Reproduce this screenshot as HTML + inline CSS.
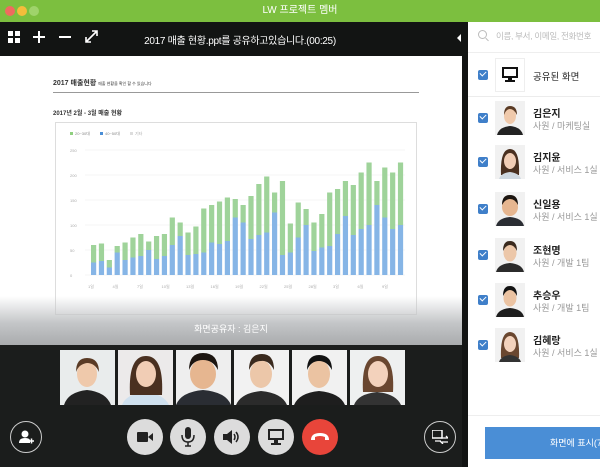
<!DOCTYPE html>
<html><head><meta charset="utf-8"><style>
*{margin:0;padding:0;box-sizing:border-box}
body{width:600px;height:467px;overflow:hidden;font-family:"Liberation Sans","Noto Sans CJK KR",sans-serif;background:#1b1d1c;position:relative}
.abs{position:absolute;white-space:nowrap}
.title{left:0;top:0;width:600px;height:22px;background:#7cbf3f;color:#fff;font-size:10px;text-align:center;line-height:22px}
.dot{top:6px;width:10px;height:10px;border-radius:50%}
.tool{left:0;top:22px;width:468px;height:34px;background:#121413;color:#fff}
.right{left:468px;top:22px;width:132px;height:445px;background:#fff}
.row{left:0;width:132px;height:44px;border-bottom:1px solid #ececec}
.cb{left:10px;width:10px;height:10px;background:#3f7fc9;border-radius:2px}
.cb:after{content:"";position:absolute;left:2px;top:1px;width:5px;height:3px;border-left:1.5px solid #fff;border-bottom:1.5px solid #fff;transform:rotate(-45deg)}
.av{left:27px;width:30px;height:34px;background:#f1f1f1;overflow:hidden}
.nm{left:65px;font-size:10px;color:#222;font-weight:bold}
.sub{left:65px;font-size:9px;color:#999}
.btn{top:419px;width:36px;height:36px;border-radius:50%;background:#dcdcdc}
.thumb{top:350px;width:55px;height:55px;overflow:hidden;background:#e8eaea}
</style></head><body>
<div class="abs title">LW 프로젝트 멤버</div>
<div class="abs dot" style="left:5px;background:#ef6b5f"></div>
<div class="abs dot" style="left:17px;background:#f3bd3b"></div>
<div class="abs dot" style="left:29px;background:#9fd36b"></div>

<div class="abs tool">
 <svg class="abs" style="left:8px;top:9px" width="12" height="12"><rect x="0" y="0" width="5" height="5" fill="#fff"/><rect x="7" y="0" width="5" height="5" fill="#fff"/><rect x="0" y="7" width="5" height="5" fill="#fff"/><rect x="7" y="7" width="5" height="5" fill="#fff"/></svg>
 <div class="abs" style="left:33px;top:14px;width:12px;height:2px;background:#fff"></div>
 <div class="abs" style="left:38px;top:9px;width:2px;height:12px;background:#fff"></div>
 <div class="abs" style="left:59px;top:14px;width:12px;height:2px;background:#fff"></div>
 <svg class="abs" style="left:85px;top:8px" width="13" height="13"><path d="M1 12 L12 1 M7 1 H12 V6 M1 7 V12 H6" stroke="#fff" stroke-width="1.6" fill="none"/></svg>
 <div class="abs" style="left:110px;top:10px;font-size:10px;width:260px;text-align:center;letter-spacing:-0.3px">2017 매출 현황.ppt를 공유하고있습니다.(00:25)</div>
 <svg class="abs" style="left:457px;top:12px" width="5" height="8"><path d="M4 0 L0 4 L4 8Z" fill="#fff"/></svg>
</div>

<!-- slide -->
<div class="abs" style="left:0;top:56px;width:462px;height:289px;background:#fff;overflow:hidden">
 <div class="abs" style="left:53px;top:22px;font-size:7px;color:#333;font-weight:bold">2017 매출현황 <span style="font-size:4px;font-weight:normal">매출 현황을 확인 할 수 있습니다</span></div>
 <div class="abs" style="left:53px;top:36px;width:366px;height:1px;background:#999"></div>
 <div class="abs" style="left:53px;top:52px;font-size:6px;color:#333;font-weight:bold">2017년 2월 - 3월 매출 현황</div>
 <div class="abs" style="left:55px;top:66px;width:362px;height:193px;border:1px solid #ddd"></div>
 <svg class="abs" style="left:0;top:0" width="462" height="289" id="ch"></svg>
 <div class="abs" style="left:0;top:240px;width:462px;height:49px;background:linear-gradient(rgba(255,255,255,0),#c4c6c8 55%,#a9abad)"></div>
 <div class="abs" style="left:0;top:266px;width:462px;text-align:center;color:#fff;font-size:9px">화면공유자 : 김은지</div>
</div>

<div class="abs thumb" style="left:60px"><svg width="55" height="55"><rect width="55" height="55" fill="#e9ecec"/><path d="M4 55 Q8 42 27 40 Q46 42 51 55Z" fill="#222"/><ellipse cx="27" cy="24" rx="10" ry="13" fill="#efc9ab"/><path d="M16 22 Q16 8 27 8 Q39 8 39 22 Q35 13 27 13 Q19 14 16 22Z" fill="#5a3b25"/></svg></div>
<div class="abs thumb" style="left:118px"><svg width="55" height="55"><rect width="55" height="55" fill="#eceaea"/><path d="M4 55 Q8 44 27 42 Q46 44 51 55Z" fill="#cfe0ee"/><path d="M12 45 Q10 6 28 6 Q46 6 44 45Z" fill="#4a3020"/><ellipse cx="28" cy="24" rx="10" ry="13" fill="#f1cdb5"/></svg></div>
<div class="abs thumb" style="left:176px"><svg width="55" height="55"><rect width="55" height="55" fill="#eee"/><path d="M0 55 Q5 42 27 40 Q50 42 55 55Z" fill="#2a2d33"/><ellipse cx="27" cy="24" rx="13" ry="15" fill="#e6b690"/><path d="M13 20 Q13 3 27 3 Q42 3 42 20 Q37 10 27 10 Q17 10 13 20Z" fill="#1c1510"/></svg></div>
<div class="abs thumb" style="left:234px"><svg width="55" height="55"><rect width="55" height="55" fill="#f2f2f2"/><path d="M2 55 Q7 43 27 41 Q48 43 53 55Z" fill="#2b2b2b"/><ellipse cx="27" cy="24" rx="11" ry="14" fill="#ecc7a9"/><path d="M15 20 Q15 4 28 4 Q40 4 40 20 Q35 10 27 11 Q19 11 15 20Z" fill="#3a2a1e"/></svg></div>
<div class="abs thumb" style="left:292px"><svg width="55" height="55"><rect width="55" height="55" fill="#f1f1f1"/><path d="M2 55 Q7 43 27 41 Q48 43 53 55Z" fill="#1e1e1e"/><ellipse cx="27" cy="24" rx="11" ry="14" fill="#ebc3a2"/><path d="M15 20 Q15 5 27 5 Q40 5 40 20 Q35 11 27 11 Q19 11 15 20Z" fill="#121212"/></svg></div>
<div class="abs thumb" style="left:350px"><svg width="55" height="55"><rect width="55" height="55" fill="#eef0f0"/><path d="M4 55 Q8 44 27 42 Q46 44 51 55Z" fill="#333"/><path d="M13 42 Q11 6 28 6 Q45 6 43 42Z" fill="#6a4730"/><ellipse cx="28" cy="24" rx="10" ry="13" fill="#f3d2bc"/></svg></div>

<div class="abs" style="left:10px;top:421px;width:32px;height:32px;border-radius:50%;border:1.5px solid #ccc"></div>
<svg class="abs" style="left:18px;top:429px" width="16" height="16"><circle cx="7" cy="5" r="3.5" fill="#fff"/><path d="M1 14 Q1 9 7 9 Q11 9 12 11 V14Z" fill="#fff"/><path d="M11 12 H16 M13.5 9.5 V14.5" stroke="#fff" stroke-width="1.5"/></svg>
<div class="abs btn" style="left:127px"></div>
<svg class="abs" style="left:137px;top:431px" width="16" height="12"><rect x="0" y="1" width="11" height="10" rx="1" fill="#222"/><path d="M11 6 L16 2 V10Z" fill="#222"/></svg>
<div class="abs btn" style="left:170px"></div>
<svg class="abs" style="left:181px;top:427px" width="14" height="20"><rect x="4" y="0" width="6" height="12" rx="3" fill="#222"/><path d="M1 8 Q1 15 7 15 Q13 15 13 8" stroke="#222" stroke-width="1.5" fill="none"/><path d="M7 15 V19 M4 19 H10" stroke="#222" stroke-width="1.5"/></svg>
<div class="abs btn" style="left:214px"></div>
<svg class="abs" style="left:223px;top:430px" width="18" height="14"><path d="M0 4 H4 L9 0 V14 L4 10 H0Z" fill="#222"/><path d="M11 4 Q13 7 11 10 M13 2 Q17 7 13 12" stroke="#222" stroke-width="1.5" fill="none"/></svg>
<div class="abs btn" style="left:258px"></div>
<svg class="abs" style="left:268px;top:429px" width="16" height="16"><rect x="0" y="0" width="16" height="11" fill="#222"/><rect x="2" y="2" width="12" height="7" fill="#dcdcdc"/><rect x="6" y="11" width="4" height="3" fill="#222"/><rect x="3" y="14" width="10" height="2" fill="#222"/></svg>
<div class="abs btn" style="left:302px;background:#e8453a"></div>
<svg class="abs" style="left:310px;top:432px" width="20" height="10"><path d="M1 8 Q1 1 10 1 Q19 1 19 8 L15 8 L15 5 Q10 3 5 5 L5 8Z" fill="#fff"/></svg>
<div class="abs" style="left:424px;top:421px;width:32px;height:32px;border-radius:50%;border:1.5px solid #ccc"></div>
<svg class="abs" style="left:432px;top:430px" width="16" height="14"><rect x="0" y="0" width="10" height="8" fill="none" stroke="#fff" stroke-width="1.5"/><path d="M3 11 H9 M9 8 H16 L14 6 M16 12 H9 L11 14" stroke="#fff" stroke-width="1.3" fill="none"/></svg>

<div class="abs right">
 <div class="abs" style="left:10px;top:8px;width:9px;height:9px;border:1.3px solid #bbb;border-radius:50%"></div>
 <div class="abs" style="left:17px;top:17px;width:4px;height:1.3px;background:#bbb;transform:rotate(45deg)"></div>
 <div class="abs" style="left:28px;top:8px;font-size:8.5px;color:#bbb;letter-spacing:-0.3px">이름, 부서, 이메일, 전화번호</div>
 <div class="abs" style="left:0;top:30px;width:132px;height:1px;background:#eee"></div>
 <div class="abs row" style="top:31px"></div>
 <div class="abs cb" style="top:48px"></div>
 <div class="abs av" style="top:36px;background:#fff;border:1px solid #eee"></div>
 <svg class="abs" style="left:34px;top:45px" width="16" height="15"><rect x="0" y="0" width="16" height="11" fill="#111"/><rect x="2" y="2" width="12" height="7" fill="#fff"/><rect x="6" y="11" width="4" height="2" fill="#111"/><rect x="3" y="13" width="10" height="2" fill="#111"/></svg>
 <div class="abs" style="left:65px;top:47px;font-size:9.5px;color:#222">공유된 화면</div>
</div>
<div class="abs" style="left:485px;top:427px;width:115px;height:32px;background:#4a8ed6;color:#fff;font-size:9px;line-height:32px;padding-left:65px;white-space:nowrap">화면에 표시(7)</div>
<div class="abs" style="left:468px;top:415px;width:132px;height:1px;background:#eee"></div>

<div class="abs" style="left:468px;top:97px;width:132px">
 <div style="position:relative;height:44px"><div class="abs cb" style="top:16px"></div><div class="abs av" style="top:4px"><svg width="30" height="34"><path d="M2 34 Q4 26 15 25 Q26 26 28 34Z" fill="#222"/><ellipse cx="15" cy="15" rx="6" ry="8" fill="#efc9ab"/><path d="M9 14 Q9 5 15 5 Q22 5 22 14 Q19 8 15 8 Q11 8 9 14Z" fill="#5a3b25"/></svg></div><div class="abs nm" style="top:8px">김은지</div><div class="abs sub" style="top:22px">사원 / 마케팅실</div></div>
 <div style="position:relative;height:45px"><div class="abs cb" style="top:16px"></div><div class="abs av" style="top:4px"><svg width="30" height="34"><path d="M6 30 Q5 4 15 4 Q25 4 24 30Z" fill="#4a3020"/><ellipse cx="15" cy="16" rx="6" ry="8" fill="#f1cdb5"/><path d="M4 34 Q6 28 15 27 Q24 28 26 34Z" fill="#cfd8e0"/></svg></div><div class="abs nm" style="top:8px">김지윤</div><div class="abs sub" style="top:22px">사원 / 서비스 1실</div></div>
 <div style="position:relative;height:46px"><div class="abs cb" style="top:18px"></div><div class="abs av" style="top:6px"><svg width="30" height="34"><path d="M1 34 Q3 26 15 25 Q27 26 29 34Z" fill="#2a2d33"/><ellipse cx="15" cy="15" rx="8" ry="9" fill="#e6b690"/><path d="M7 13 Q7 3 15 3 Q23 3 23 13 Q20 7 15 7 Q10 7 7 13Z" fill="#1c1510"/></svg></div><div class="abs nm" style="top:10px">신일용</div><div class="abs sub" style="top:24px">사원 / 서비스 1실</div></div>
 <div style="position:relative;height:45px"><div class="abs cb" style="top:18px"></div><div class="abs av" style="top:6px"><svg width="30" height="34"><path d="M1 34 Q3 26 15 25 Q27 26 29 34Z" fill="#2b2b2b"/><ellipse cx="15" cy="15" rx="6.5" ry="8.5" fill="#ecc7a9"/><path d="M8 13 Q8 3 15 3 Q22 3 22 13 Q19 7 15 7 Q11 7 8 13Z" fill="#3a2a1e"/></svg></div><div class="abs nm" style="top:10px">조현명</div><div class="abs sub" style="top:24px">사원 / 개발 1팀</div></div>
 <div style="position:relative;height:45px"><div class="abs cb" style="top:18px"></div><div class="abs av" style="top:6px"><svg width="30" height="34"><path d="M1 34 Q3 26 15 25 Q27 26 29 34Z" fill="#1e1e1e"/><ellipse cx="15" cy="15" rx="6.5" ry="8.5" fill="#ebc3a2"/><path d="M8 13 Q8 3 15 3 Q22 3 22 13 Q19 7 15 7 Q11 7 8 13Z" fill="#121212"/></svg></div><div class="abs nm" style="top:10px">추승우</div><div class="abs sub" style="top:24px">사원 / 개발 1팀</div></div>
 <div style="position:relative;height:45px"><div class="abs cb" style="top:18px"></div><div class="abs av" style="top:6px"><svg width="30" height="34"><path d="M6 30 Q5 4 15 4 Q25 4 24 30Z" fill="#6a4730"/><ellipse cx="15" cy="16" rx="6" ry="8" fill="#f3d2bc"/><path d="M4 34 Q6 28 15 27 Q24 28 26 34Z" fill="#333"/></svg></div><div class="abs nm" style="top:10px">김혜랑</div><div class="abs sub" style="top:24px">사원 / 서비스 1실</div></div>
</div>
<div class="abs" style="left:462px;top:56px;width:6px;height:411px;background:#121413"></div>

<script>
var t=[60,63,30,58,65,75,82,67,78,82,115,105,85,97,133,140,147,155,152,140,158,182,197,165,188,103,145,132,105,122,165,172,188,180,205,225,188,215,205,225];
var b=[25,28,15,45,30,35,38,50,32,38,60,78,40,42,45,65,62,68,115,105,72,80,85,125,40,45,75,100,48,55,58,82,118,80,92,100,140,115,92,100];
var s='',base=219;
for(var k=0;k<=5;k++){var y=base-k*25;s+='<line x1="85" x2="405" y1="'+y+'" y2="'+y+'" stroke="#eee" stroke-width="0.6"/><text x="70" y="'+(y+2)+'" font-size="4" fill="#aaa">'+(k*50)+'</text>';}
for(var i=0;i<40;i++){var x=91+7.87*i;s+='<rect x="'+x+'" y="'+(base-t[i]/2)+'" width="5.2" height="'+((t[i]-b[i])/2)+'" fill="#9fd39a"/><rect x="'+x+'" y="'+(base-b[i]/2)+'" width="5.2" height="'+(b[i]/2)+'" fill="#86b5e6"/>';}
s+='<rect x="70" y="76" width="3" height="3" fill="#8fcf7f"/><text x="75" y="79" font-size="4" fill="#888">20~30대</text><rect x="100" y="76" width="3" height="3" fill="#4a8ed6"/><text x="105" y="79" font-size="4" fill="#888">40~50대</text><rect x="130" y="76" width="3" height="3" fill="#ddd"/><text x="135" y="79" font-size="4" fill="#aaa">기타</text>';
var lb=['1일','4일','7일','10일','13일','16일','19일','22일','25일','28일','3일','6일','9일'];
for(var j=0;j<13;j++)s+='<text x="'+(88+j*24.5)+'" y="232" font-size="4" fill="#aaa">'+lb[j]+'</text>';
document.getElementById('ch').innerHTML=s;
</script>
</body></html>
